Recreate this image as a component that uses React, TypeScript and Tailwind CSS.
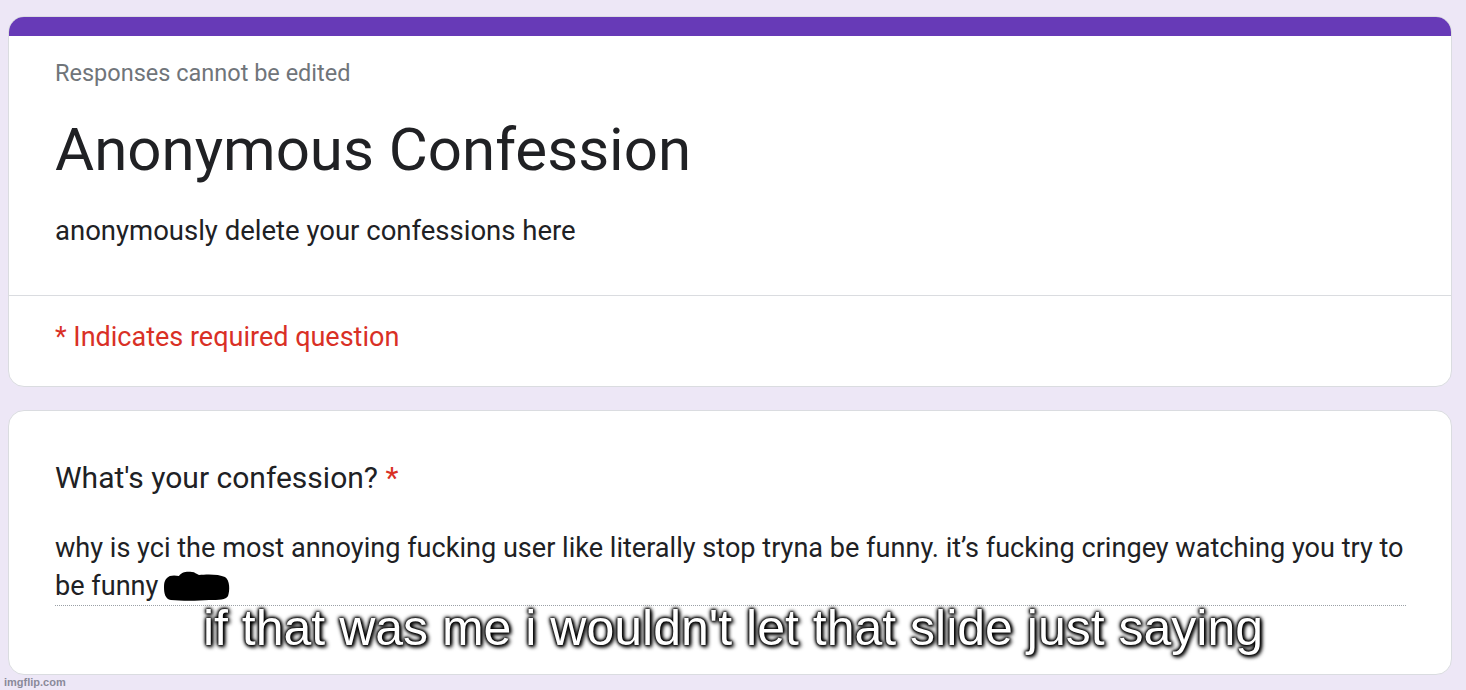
import React from "react";

function Scribble() {
  return (
    <svg width="68" height="30" viewBox="0 0 68 30" className="inline-block align-middle -mt-1 -ml-[2px]">
      <path
        d="M4 7 C6 4 12 4 16 5 C18 1 24 0 29 1 C32 1 33 3 36 4 C44 3 56 3 62 6 C67 9 67 20 65 25 C63 29 56 29 46 29 C34 30 18 30 8 29 C2 28 1 22 1 16 C1 11 2 9 4 7 Z"
        fill="#000"
      />
    </svg>
  );
}

export default function App() {
  return (
    <div
      className="relative w-[1466px] h-[690px] bg-[#ede7f6] overflow-hidden"
      style={{ fontFamily: "Roboto, 'Noto Sans', sans-serif" }}
    >
      <div className="flex flex-col gap-[23px] pt-4 pl-2 w-[1452px]">
        {/* Header card */}
        <div className="rounded-[16px] border border-[#dadce0] bg-white overflow-hidden">
          <div className="h-[19px] bg-[#673ab7]" />
          <div className="pl-[46px] pt-[23px] pb-[48px]">
            <div className="text-[23.5px] leading-[28px] text-[#70757a]">Responses cannot be edited</div>
            <div className="mt-[27px] text-[60px] leading-[72px] text-[#202124]">Anonymous Confession</div>
            <div className="mt-[29px] text-[27.5px] leading-[32px] text-[#202124]">
              anonymously delete your confessions here
            </div>
          </div>
          <div className="h-px bg-[#dadce0]" />
          <div className="pl-[46px] pt-[25px] pb-[33px] text-[27px] leading-[32px] text-[#d93025]">
            * Indicates required question
          </div>
        </div>

        {/* Question card */}
        <div className="rounded-[16px] border border-[#dadce0] bg-white pl-[46px] pr-[45px] pt-[49px] pb-[68px]">
          <div className="text-[30px] leading-[36px] text-[#202124]">
            What's your confession? <span className="text-[#d93025]">*</span>
          </div>
          <div className="mt-[33px] text-[27.1px] leading-[38px] text-[#202124] border-b border-dotted border-[#9aa0a6]">
            <div className="whitespace-nowrap">why is yci the most annoying fucking user like literally stop tryna be funny. it’s fucking cringey watching you try to</div>
            <div>
              be funny <Scribble />
            </div>
          </div>
        </div>
      </div>

      {/* Caption overlay */}
      <div
        className="absolute left-0 right-0 top-[599px] text-center text-white text-[50px] leading-[58px] [text-shadow:0_0_2px_#000,0_0_3px_#000,0_0_4px_#000,0_0_5px_#000,2px_2px_4px_#000]"
        style={{ fontFamily: "'Liberation Sans', Arial, sans-serif" }}
      >
        if that was me i wouldn't let that slide just saying
      </div>

      {/* watermark */}
      <div
        className="absolute left-[4px] bottom-[2px] text-[11px] leading-[12px] font-bold text-[#8a8a9a]"
        style={{ fontFamily: "'Liberation Sans', Arial, sans-serif" }}
      >
        imgflip.com
      </div>
    </div>
  );
}
